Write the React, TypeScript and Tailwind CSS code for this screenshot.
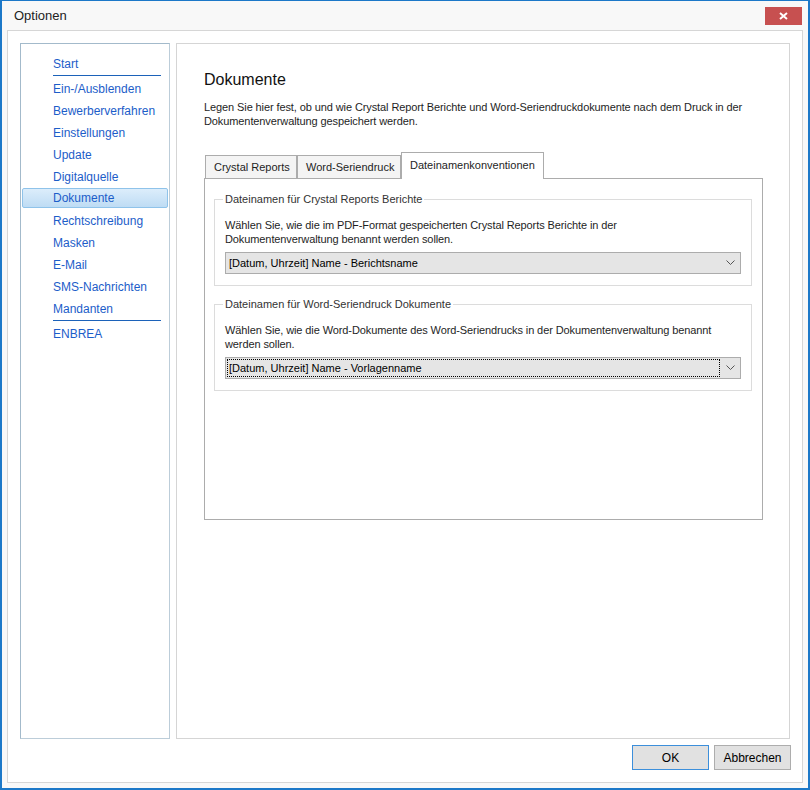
import { useState } from "react";

const Chevron = () => (
  <svg width="9" height="6" viewBox="0 0 9 6" className="shrink-0">
    <polyline points="0.5,0.5 4.5,4.5 8.5,0.5" fill="none" stroke="#555" strokeWidth="1" />
  </svg>
);

const Select = ({ value, focused }: { value: string; focused?: boolean }) => (
  <div className="flex h-[22px] items-stretch border border-[#acacac] bg-[#e5e5e5] text-[11px] text-black">
    <div
      className={
        focused
          ? "m-[1px] flex flex-1 items-center border border-dotted border-black pl-[1px]"
          : "m-[1px] flex flex-1 items-center border border-transparent pl-[1px]"
      }
    >
      {value}
    </div>
    <div className="flex w-[19px] items-center justify-center">
      <Chevron />
    </div>
  </div>
);

const Group = ({
  title,
  text,
  value,
  focused,
  textWidth,
  className,
}: {
  title: string;
  text: string;
  value: string;
  focused?: boolean;
  textWidth: string;
  className?: string;
}) => (
  <fieldset className={"mx-[9px] mr-[10px] border border-[#dcdcdc] px-[10px] pb-[11px] " + (className ?? "")}>
    <legend className="ml-[-2px] px-[2px] text-[11px] leading-[14px] text-[#333]">{title}</legend>
    <p className={"mt-[12px] text-[11px] leading-[14px] tracking-[-0.1px] text-[#1e1e1e] " + textWidth}>{text}</p>
    <div className="mt-[6px]">
      <Select value={value} focused={focused} />
    </div>
  </fieldset>
);

const App = () => {
  const [nav] = useState([
    "Ein-/Ausblenden",
    "Bewerberverfahren",
    "Einstellungen",
    "Update",
    "Digitalquelle",
    "Dokumente",
    "Rechtschreibung",
    "Masken",
    "E-Mail",
    "SMS-Nachrichten",
    "Mandanten",
  ]);
  const [tabs] = useState([
    { id: 1, name: "Crystal Reports", width: "w-[92px]" },
    { id: 2, name: "Word-Seriendruck", width: "w-[104px]" },
    { id: 3, name: "Dateinamenkonventionen", width: "w-[143px]" },
  ]);
  const active = 3;
  const selected = "Dokumente";

  return (
    <div
      className="flex h-[790px] w-[810px] flex-col border-x-2 border-b-2 border-t border-[#1c78c8] bg-[#f8f8f8]"
      style={{ fontFamily: '"Liberation Sans", Arial, sans-serif' }}
    >
      {/* title bar */}
      <div className="flex h-[29px] shrink-0 items-start justify-between">
        <span className="pl-[12px] pt-[7px] text-[13px] leading-[16px] text-[#222]">Optionen</span>
        <button className="mr-[6px] mt-[6px] flex h-[18px] w-[37px] items-center justify-center bg-[#c75050]">
          <svg width="9" height="8" viewBox="0 0 9 8">
            <path d="M1 1 L8 7 M8 1 L1 7" stroke="#fff" strokeWidth="2" />
          </svg>
        </button>
      </div>

      {/* frame */}
      <div className="mx-[5px] mb-[5px] flex flex-1 flex-col border border-[#d6d6d6] bg-white p-[12px]">
        <div className="flex h-[696px] gap-[6px]">
          {/* navigation */}
          <div className="w-[150px] border border-[#bccdd9] border-l-[#a3bacb] border-t-[#a3bacb] pt-[9px] text-[12px] text-[#1c5dc9]">
            <div className="flex h-[22px] items-center pl-[32px]">Start</div>
            <div className="ml-[32px] w-[108px] border-t border-[#1c62b9]" />
            <div className="mt-[2px]">
              {nav.map((item) =>
                item === selected ? (
                  <div
                    key={item}
                    className="mx-[1px] mb-[2px] flex h-[20px] items-center rounded-[2px] border border-[#8fc3ea] bg-gradient-to-b from-[#dcedfb] to-[#bedcf4] pl-[30px]"
                  >
                    {item}
                  </div>
                ) : (
                  <div key={item} className="flex h-[22px] items-center pl-[32px]">
                    {item}
                  </div>
                )
              )}
            </div>
            <div className="ml-[32px] w-[108px] border-t border-[#1c62b9]" />
            <div className="mt-[2px] flex h-[22px] items-center pl-[32px]">ENBREA</div>
          </div>

          {/* content */}
          <div className="flex-1 border border-[#d5d5d5] pl-[27px] pt-[26px]">
            <h1 className="text-[16px] leading-[20px] text-[#111]">Dokumente</h1>
            <p className="mt-[10px] max-w-[560px] text-[11px] leading-[14px] tracking-[-0.1px] text-[#1e1e1e]">
              Legen Sie hier fest, ob und wie Crystal Report Berichte und Word-Seriendruckdokumente nach dem Druck in der
              Dokumentenverwaltung gespeichert werden.
            </p>

            <div className="mt-[24px] w-[559px]">
              <div className="flex h-[26px] items-end pl-[1px] text-[11px] text-[#1e1e1e]">
                {tabs.map((tab) =>
                  tab.id === active ? (
                    <div
                      key={tab.id}
                      className={"relative z-10 -mb-px flex h-[27px] items-center border border-b-0 border-[#acacac] bg-white pb-[2px] pl-[8px] " + tab.width}
                    >
                      {tab.name}
                    </div>
                  ) : (
                    <div
                      key={tab.id}
                      className={"flex h-[23px] items-center border border-b-0 border-[#acacac] bg-[#f4f4f4] pl-[8px] " + tab.width}
                    >
                      {tab.name}
                    </div>
                  )
                )}
              </div>
              <div className="h-[342px] border border-[#acacac] bg-white pt-[13px]">
                <Group
                  title="Dateinamen für Crystal Reports Berichte"
                  text="Wählen Sie, wie die im PDF-Format gespeicherten Crystal Reports Berichte in der Dokumentenverwaltung benannt werden sollen."
                  value="[Datum, Uhrzeit] Name - Berichtsname"
                  textWidth="w-[400px]"
                />
                <Group
                  title="Dateinamen für Word-Seriendruck Dokumente"
                  text="Wählen Sie, wie die Word-Dokumente des Word-Seriendrucks in der Dokumentenverwaltung benannt werden sollen."
                  value="[Datum, Uhrzeit] Name - Vorlagenname"
                  focused
                  textWidth="w-[510px]"
                  className="mt-[11px]"
                />
              </div>
            </div>
          </div>
        </div>

        {/* buttons */}
        <div className="-mr-[1px] mt-[6px] flex justify-end gap-[5px]">
          <button className="h-[25px] w-[77px] border border-[#3c8fdb] bg-[#e1e1e1] text-[12px] text-black">OK</button>
          <button className="h-[25px] w-[77px] border border-[#adadad] bg-[#e1e1e1] text-[12px] text-black">Abbrechen</button>
        </div>
      </div>
    </div>
  );
};

export default App;
